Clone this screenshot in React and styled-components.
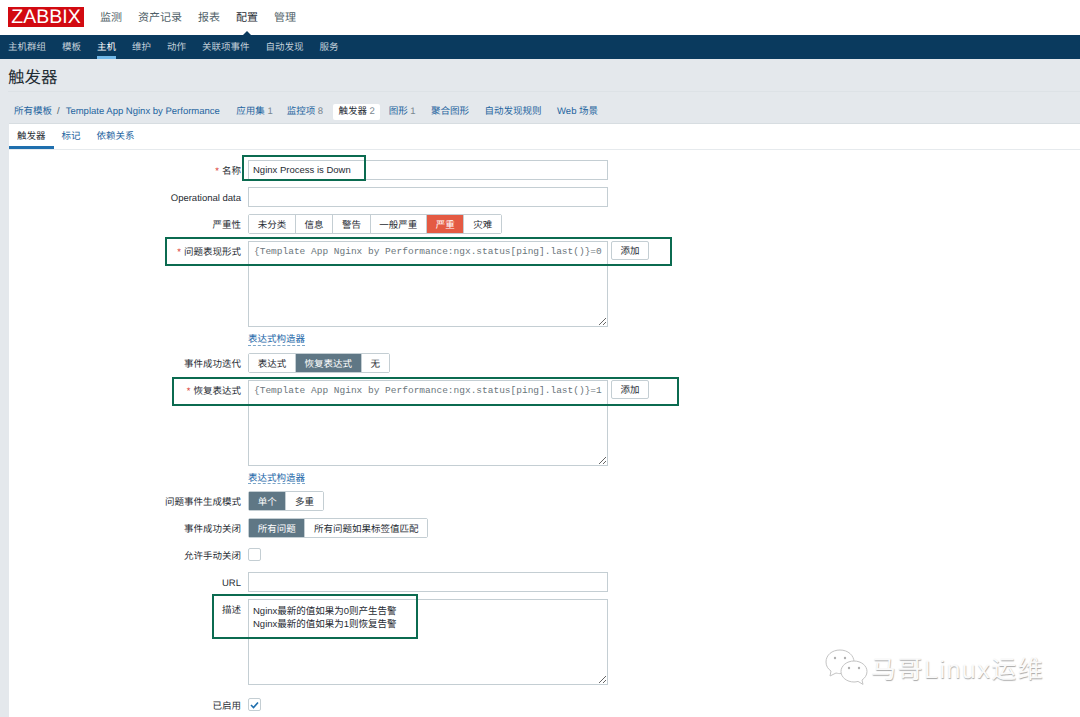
import React from "react";
import styled, { createGlobalStyle } from "styled-components";

const sans = `"Liberation Sans", "Noto Sans CJK SC", sans-serif`;
const mono = `"Liberation Mono", monospace`;

const GlobalStyle = createGlobalStyle`
  html, body {
    margin: 0;
    padding: 0;
    background: #e4e8ec;
  }
  body {
    font-family: ${sans};
    font-size: 9.5px;
    color: #1f2c33;
    overflow: hidden;
    text-rendering: geometricPrecision;
  }
`;

const Page = styled.div`
  position: relative;
  width: 1080px;
  height: 717px;
  overflow: hidden;
`;

const TopBar = styled.div`
  display: flex;
  align-items: center;
  height: 35px;
  background: #fff;
  padding: 0 0 2px 8px;
  box-sizing: border-box;
`;
const Logo = styled.div`
  width: 76px;
  height: 20px;
  margin-right: 16px;
  background: #d20a11;
  color: #fff;
  font-size: 19.5px;
  line-height: 20px;
  text-align: center;
`;
const TopMenu = styled.div`
  display: flex;
  gap: 16px;
  height: 100%;
  align-items: center;
`;
const TopItem = styled.div`
  position: relative;
  font-size: 11px;
  color: ${(p) => (p.$active ? "#1f2c33" : "#4f5f68")};
  &::after {
    content: "";
    display: ${(p) => (p.$active ? "block" : "none")};
    position: absolute;
    left: 50%;
    bottom: -12px;
    margin-left: -6px;
    border-left: 6px solid transparent;
    border-right: 6px solid transparent;
    border-bottom: 6px solid #0a3a5e;
  }
`;

const SubBar = styled.div`
  display: flex;
  gap: 16px;
  height: 24px;
  padding-left: 8px;
  background: #0a3a5e;
`;
const SubItem = styled.div`
  height: 24px;
  line-height: 25px;
  box-sizing: border-box;
  color: ${(p) => (p.$active ? "#fff" : "#c3d0da")};
  border-bottom: 3px solid ${(p) => (p.$active ? "#71b8e8" : "transparent")};
`;

const Title = styled.h1`
  margin: 0 0 0 8px;
  padding-top: 9px;
  height: 23px;
  font-size: 16.5px;
  line-height: 21px;
  font-weight: 400;
  color: #1f2c33;
`;

const Crumbs = styled.div`
  display: flex;
  align-items: center;
  height: 32px;
  margin-left: 8px;
  padding: 8px 0 0 6px;
  border-top: 1px solid #dde2e6;
  box-sizing: border-box;
  line-height: 12px;
`;
const Crumb = styled.span`
  color: #1f65a0;
  margin-right: ${(p) => p.$gap ?? 15.5}px;
`;
const Count = styled.span`
  color: #7a8790;
  margin-left: 2.5px;
`;
const Slash = styled.span`
  color: #4f5f68;
  margin: 0 6px 0 5px;
`;
const ActiveCrumb = styled.span`
  background: #fff;
  border-radius: 2px;
  padding: 2px 5px;
  margin: 0 9px 0 -5.1px;
  color: #1f2c33;
`;

const Panel = styled.div`
  margin-left: 9px;
  height: 594px;
  background: #fff;
  border-top: 1px solid #d7dde1;
  box-sizing: border-box;
`;
const Tabs = styled.div`
  display: flex;
  height: 25px;
  border-bottom: 1px solid #e6eaed;
  box-sizing: content-box;
`;
const Tab = styled.div`
  padding: 0 8px;
  height: 25px;
  line-height: 25px;
  box-sizing: border-box;
  color: ${(p) => (p.$active ? "#1f2c33" : "#1f65a0")};
  border-bottom: 3px solid ${(p) => (p.$active ? "#1f6fae" : "transparent")};
`;

const Form = styled.div`
  display: flex;
  flex-direction: column;
  gap: 7px;
  padding-top: 10px;
`;
const Row = styled.div`
  display: flex;
  gap: 7px;
  min-height: 20px;
  align-items: flex-start;
  margin-top: ${(p) => p.$mt ?? 0}px;
`;
const Label = styled.div`
  width: 232px;
  height: 20px;
  flex: none;
  box-sizing: border-box;
  padding-top: 1.5px;
  text-align: right;
  line-height: 19px;
  color: #1f2c33;
`;
const Star = styled.span`
  color: #d9352c;
  margin-right: 3px;
`;
const Field = styled.div`
  display: flex;
  flex-direction: column;
  align-items: flex-start;
`;
const TextInput = styled.input`
  display: block;
  width: 360px;
  height: 20px;
  margin: 0;
  padding: 0 4px 2px;
  box-sizing: border-box;
  border: 1px solid #c4ced3;
  border-radius: 0;
  outline: none;
  background: #fff;
  font-family: ${sans};
  font-size: 9.5px;
  color: #1f2c33;
`;
const Area = styled.textarea`
  display: block;
  width: 360px;
  height: ${(p) => p.$h ?? 86}px;
  margin: 0;
  padding: ${(p) => (p.$mono ? "3px 5px" : "4px 4px")};
  box-sizing: border-box;
  border: 1px solid #c4ced3;
  border-radius: 0;
  outline: none;
  background: #fff;
  overflow: hidden;
  white-space: pre;
  font-family: ${(p) => (p.$mono ? mono : sans)};
  font-size: 9.5px;
  line-height: 13px;
  color: ${(p) => (p.$mono ? "#6b767c" : "#1f2c33")};
`;
const AddRow = styled.div`
  display: flex;
  gap: 3px;
  align-items: flex-start;
`;
const AddButton = styled.div`
  width: 38px;
  height: 19px;
  line-height: 19px;
  box-sizing: border-box;
  text-align: center;
  border: 1px solid #c4ced3;
  border-radius: 2px;
  color: #1f2c33;
`;
const Builder = styled.div`
  margin-top: 5px;
  height: ${(p) => p.$h ?? 13}px;
  line-height: 15px;
  color: #1a66a8;
  border-bottom: 1px dashed #7ba6c9;
`;
const Segments = styled.div`
  display: flex;
  height: 20px;
  box-sizing: border-box;
  border: 1px solid #c4ced3;
  border-radius: 2px;
`;
const Segment = styled.div`
  padding: 1.5px 8.7px 0;
  line-height: 18px;
  white-space: nowrap;
  border-left: ${(p) => (p.$first ? "none" : "1px solid #c4ced3")};
  background: ${(p) => p.$bg ?? "#fff"};
  color: ${(p) => (p.$bg ? "#fff" : "#1f2c33")};
`;
const CheckRow = styled.div`
  display: flex;
  align-items: center;
  height: 19px;
`;
const CheckBox = styled.div`
  width: 13px;
  height: 13px;
  box-sizing: border-box;
  border: 1px solid #c4ced3;
  border-radius: 2px;
  background: #fff;
  display: flex;
  align-items: center;
  justify-content: center;
`;

const Callout = styled.div`
  position: absolute;
  left: ${(p) => p.$x}px;
  top: ${(p) => p.$y}px;
  width: ${(p) => p.$w}px;
  height: ${(p) => p.$h}px;
  box-sizing: border-box;
  border: 2px solid #0b6b50;
  pointer-events: none;
`;

const Watermark = styled.div`
  position: absolute;
  left: 824px;
  top: 648px;
  display: flex;
  align-items: center;
  gap: 3px;
`;
const WatermarkText = styled.span`
  padding-top: 6px;
  font-family: ${sans};
  font-size: 25px;
  line-height: 30px;
  letter-spacing: 1.5px;
  color: #fafafa;
  text-shadow: 0.5px 0.5px 1px #a8a8a8;
  white-space: nowrap;
`;

const Bubbles = () => (
  <svg width="44" height="38" viewBox="0 0 44 38" fill="#fff" stroke="#c4c4c4" strokeWidth="1">
    <path d="M16 2C8 2 2 7 2 14c0 4 2 7 5 9l-1 5 6-3c2 .5 3 .6 4 .6 8 0 14-5 14-11.600S24 2 16 2z" />
    <path d="M30 13c-7 0-13 4.500-13 10.500S23 34 30 34c1.500 0 2.500-.2 4-.6l5 3-1-4.400c3-2 5-5 5-8.500C43 17.500 37 13 30 13z" />
    <circle cx="11" cy="10" r="1.200" fill="#b0b0b0" stroke="none" />
    <circle cx="21" cy="10" r="1.200" fill="#b0b0b0" stroke="none" />
    <circle cx="25" cy="20" r="1.200" fill="#b0b0b0" stroke="none" />
    <circle cx="35" cy="20" r="1.200" fill="#b0b0b0" stroke="none" />
  </svg>
);

const topItems = ["监测", "资产记录", "报表", "配置", "管理"];
const subItems = ["主机群组", "模板", "主机", "维护", "动作", "关联项事件", "自动发现", "服务"];
const severities = ["未分类", "信息", "警告", "一般严重", "严重", "灾难"];
const problemExpr = "{Template App Nginx by Performance:ngx.status[ping].last()}=0";
const recoveryExpr = "{Template App Nginx by Performance:ngx.status[ping].last()}=1";
const description = "Nginx最新的值如果为0则产生告警\nNginx最新的值如果为1则恢复告警";

const SLATE = "#5f7785";
const RED = "#e45a43";

function SegmentGroup({ items, active, color = SLATE }) {
  return (
    <Segments>
      {items.map((item, i) => (
        <Segment key={item} $first={i === 0} $bg={item === active ? color : undefined}>
          {item}
        </Segment>
      ))}
    </Segments>
  );
}

export default function App() {
  return (
    <Page>
      <GlobalStyle />
      <TopBar>
        <Logo>ZABBIX</Logo>
        <TopMenu>
          {topItems.map((item) => (
            <TopItem key={item} $active={item === "配置"}>
              {item}
            </TopItem>
          ))}
        </TopMenu>
      </TopBar>
      <SubBar>
        {subItems.map((item) => (
          <SubItem key={item} $active={item === "主机"}>
            {item}
          </SubItem>
        ))}
      </SubBar>
      <Title>触发器</Title>
      <Crumbs>
        <Crumb $gap={0}>所有模板</Crumb>
        <Slash>/</Slash>
        <Crumb $gap={16.5}>Template App Nginx by Performance</Crumb>
        <Crumb $gap={14}>
          应用集<Count>1</Count>
        </Crumb>
        <Crumb>
          监控项<Count>8</Count>
        </Crumb>
        <ActiveCrumb>
          触发器<Count>2</Count>
        </ActiveCrumb>
        <Crumb>
          图形<Count>1</Count>
        </Crumb>
        <Crumb>聚合图形</Crumb>
        <Crumb>自动发现规则</Crumb>
        <Crumb>Web 场景</Crumb>
      </Crumbs>
      <Panel>
        <Tabs>
          <Tab $active>触发器</Tab>
          <Tab>标记</Tab>
          <Tab>依赖关系</Tab>
        </Tabs>
        <Form>
          <Row>
            <Label>
              <Star>*</Star>名称
            </Label>
            <TextInput readOnly value="Nginx Process is Down" />
          </Row>
          <Row>
            <Label>Operational data</Label>
            <TextInput readOnly value="" />
          </Row>
          <Row>
            <Label>严重性</Label>
            <SegmentGroup items={severities} active="严重" color={RED} />
          </Row>
          <Row>
            <Label>
              <Star>*</Star>问题表现形式
            </Label>
            <Field>
              <AddRow>
                <Area $mono readOnly value={problemExpr} />
                <AddButton>添加</AddButton>
              </AddRow>
              <Builder>表达式构造器</Builder>
            </Field>
          </Row>
          <Row>
            <Label>事件成功迭代</Label>
            <SegmentGroup items={["表达式", "恢复表达式", "无"]} active="恢复表达式" />
          </Row>
          <Row>
            <Label>
              <Star>*</Star>恢复表达式
            </Label>
            <Field>
              <AddRow>
                <Area $mono readOnly value={recoveryExpr} />
                <AddButton>添加</AddButton>
              </AddRow>
              <Builder $h={12}>表达式构造器</Builder>
            </Field>
          </Row>
          <Row>
            <Label>问题事件生成模式</Label>
            <SegmentGroup items={["单个", "多重"]} active="单个" />
          </Row>
          <Row>
            <Label>事件成功关闭</Label>
            <SegmentGroup items={["所有问题", "所有问题如果标签值匹配"]} active="所有问题" />
          </Row>
          <Row>
            <Label>允许手动关闭</Label>
            <CheckRow>
              <CheckBox />
            </CheckRow>
          </Row>
          <Row>
            <Label>URL</Label>
            <TextInput readOnly value="" />
          </Row>
          <Row>
            <Label>描述</Label>
            <Area readOnly value={description} />
          </Row>
          <Row $mt={3}>
            <Label>已启用</Label>
            <CheckRow>
              <CheckBox>
                <svg width="9" height="8" viewBox="0 0 9 8" fill="none" stroke="#1f6fae" strokeWidth="1.600">
                  <path d="M1 4l2.500 2.500L8 1.500" />
                </svg>
              </CheckBox>
            </CheckRow>
          </Row>
        </Form>
      </Panel>
      <Callout $x={242} $y={155} $w={124} $h={26} />
      <Callout $x={165} $y={237} $w={507} $h={29} />
      <Callout $x={172} $y={377} $w={507} $h={29} />
      <Callout $x={212} $y={594} $w={206} $h={45} />
      <Watermark>
        <Bubbles />
        <WatermarkText>马哥Linux运维</WatermarkText>
      </Watermark>
    </Page>
  );
}
